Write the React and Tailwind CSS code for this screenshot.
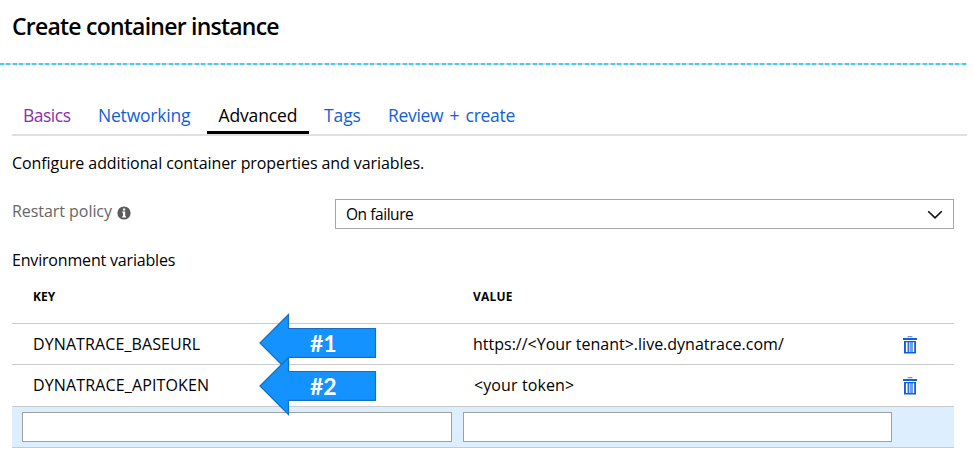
import React from 'react';

function TrashIcon() {
  return (
    <svg width="14" height="18" viewBox="0 0 14 18" className="mt-[2px] block" fill="#1160d8">
      <rect x="4.6" y="0.2" width="4.8" height="1" opacity="0.8" />
      <rect x="0" y="2" width="14" height="2" />
      <path fillRule="evenodd" d="M1 5H13V17.4H1ZM2.9 6.2V16H4.6V6.2ZM5.9 6.2V16H6.7V6.2ZM7.6 6.2V16H8.4V6.2ZM9.6 6.2V16H11.2V6.2Z" />
    </svg>
  );
}

function Arrow({ label, className }) {
  return (
    <div className={className}>
      <svg width="118" height="60" viewBox="0 0 118 60" className="absolute inset-0">
        <path d="M1 30L29.5 1.5V15.5H116.5V44.3H29.5V58.5Z" fill="#1492ff" stroke="#1670bd" strokeWidth="1.2" />
      </svg>
      <span className="relative block pl-[51px] pt-[16px] font-['Lato'] text-[23px] leading-[28px] font-bold text-white">{label}</span>
    </div>
  );
}

function Row({ name, value, className, nameClass, valueClass }) {
  return (
    <div className={className}>
      <span className="w-[440px] shrink-0"><span className={nameClass}>{name}</span></span>
      <span className="w-[430px] shrink-0"><span className={valueClass}>{value}</span></span>
      <TrashIcon />
    </div>
  );
}

export default function App() {
  return (
    <div className="relative h-[464px] w-[974px] overflow-hidden bg-white font-['Open_Sans',sans-serif] text-[16px] whitespace-nowrap text-black">
      <header className="h-[63px] pl-[12px] pt-[10px]">
        <h1 className="text-[23px] leading-[32px] font-semibold tracking-[-0.77px]">Create container instance</h1>
      </header>
      <div className="h-[2px] w-[967px] bg-[repeating-linear-gradient(90deg,#3dcdf8_0_3.8px,#dcdcdc_3.8px_6.5px)]" />
      <nav className="ml-[12px] mt-[32px] flex h-[39px] w-[955px] border-b-2 border-[#e0e0e0] text-[17.5px] leading-[37px] text-[#1160d8]">
        <a className="w-[75px] shrink-0 pl-[11px] tracking-[-0.5px] text-[#8b2fa8]">Basics</a>
        <a className="w-[120px] shrink-0 pl-[11px] tracking-[-0.2px]">Networking</a>
        <a className="h-[37px] w-[102px] shrink-0 border-b-[3px] border-black pl-[11.5px] tracking-[-0.15px] text-black">Advanced</a>
        <a className="w-[64px] shrink-0 pl-[15px] tracking-[-0.1px]">Tags</a>
        <a className="pl-[15px] tracking-[-0.3px] [word-spacing:2px]">Review + create</a>
      </nav>
      <main className="ml-[12px] w-[942px]">
        <p className="h-[40px] pt-[15px] leading-[24px] tracking-[-0.08px]">Configure additional container properties and variables.</p>
        <div className="mt-[23px] flex h-[30px]">
          <label className="flex w-[323px] shrink-0 leading-[24px] text-[#666]">
            <span className="tracking-[-0.05px]">Restart policy</span>
            <svg width="14" height="14" viewBox="0 0 14 14" className="ml-[5px] mt-[7px]">
              <circle cx="7" cy="7" r="6.6" fill="#5c5c5c" />
              <path d="M6 2.4H8.2V4.4H6ZM5.2 5.6H8.2V10.2H9V11.4H5.2V10.2H6V6.8H5.2Z" fill="#fff" />
            </svg>
          </label>
          <div className="flex flex-1 items-center justify-between border border-[#a6a6a6] pl-[10px] pr-[10px] text-[15.5px] tracking-[-0.45px]">
            <span className="pt-[2px]">On failure</span>
            <svg width="16" height="10" viewBox="0 0 16 10" fill="none" stroke="#111" strokeWidth="1.6" className="mt-[2px]"><path d="M1.2 1.2L8 7.8L14.8 1.2" /></svg>
          </div>
        </div>
        <h2 className="mt-[19px] leading-[24px] tracking-[-0.18px]">Environment variables</h2>
        <div className="flex h-[52px] items-center border-b border-[#cacaca] pb-[2px] pl-[21px] text-[12px] font-bold">
          <span className="w-[440px]">KEY</span>
          <span className="tracking-[0.2px]">VALUE</span>
        </div>
        <Row name="DYNATRACE_BASEURL" value="https://<Your tenant>.live.dynatrace.com/" className="flex h-[41px] items-center border-b border-[#cacaca] pl-[21px]" nameClass="tracking-[0.1px]" valueClass="" />
        <Row name="DYNATRACE_APITOKEN" value="<your token>" className="flex h-[42px] items-center border-b border-[#cacaca] pb-[1px] pl-[21px]" nameClass="tracking-[0.14px]" valueClass="pl-[1px] tracking-[0.1px]" />
        <div className="flex h-[41px] gap-[11px] border-b border-[#cacaca] bg-[#dceeff] pl-[10px] pt-[5px]">
          <div className="h-[30px] w-[430px] border border-[#a0a0a0] bg-white" />
          <div className="h-[30px] w-[429px] border border-[#a0a0a0] bg-white" />
        </div>
      </main>
      <Arrow label="#1" className="absolute left-[259px] top-[313px] h-[60px] w-[118px]" />
      <Arrow label="#2" className="absolute left-[259px] top-[356px] h-[60px] w-[118px]" />
    </div>
  );
}
